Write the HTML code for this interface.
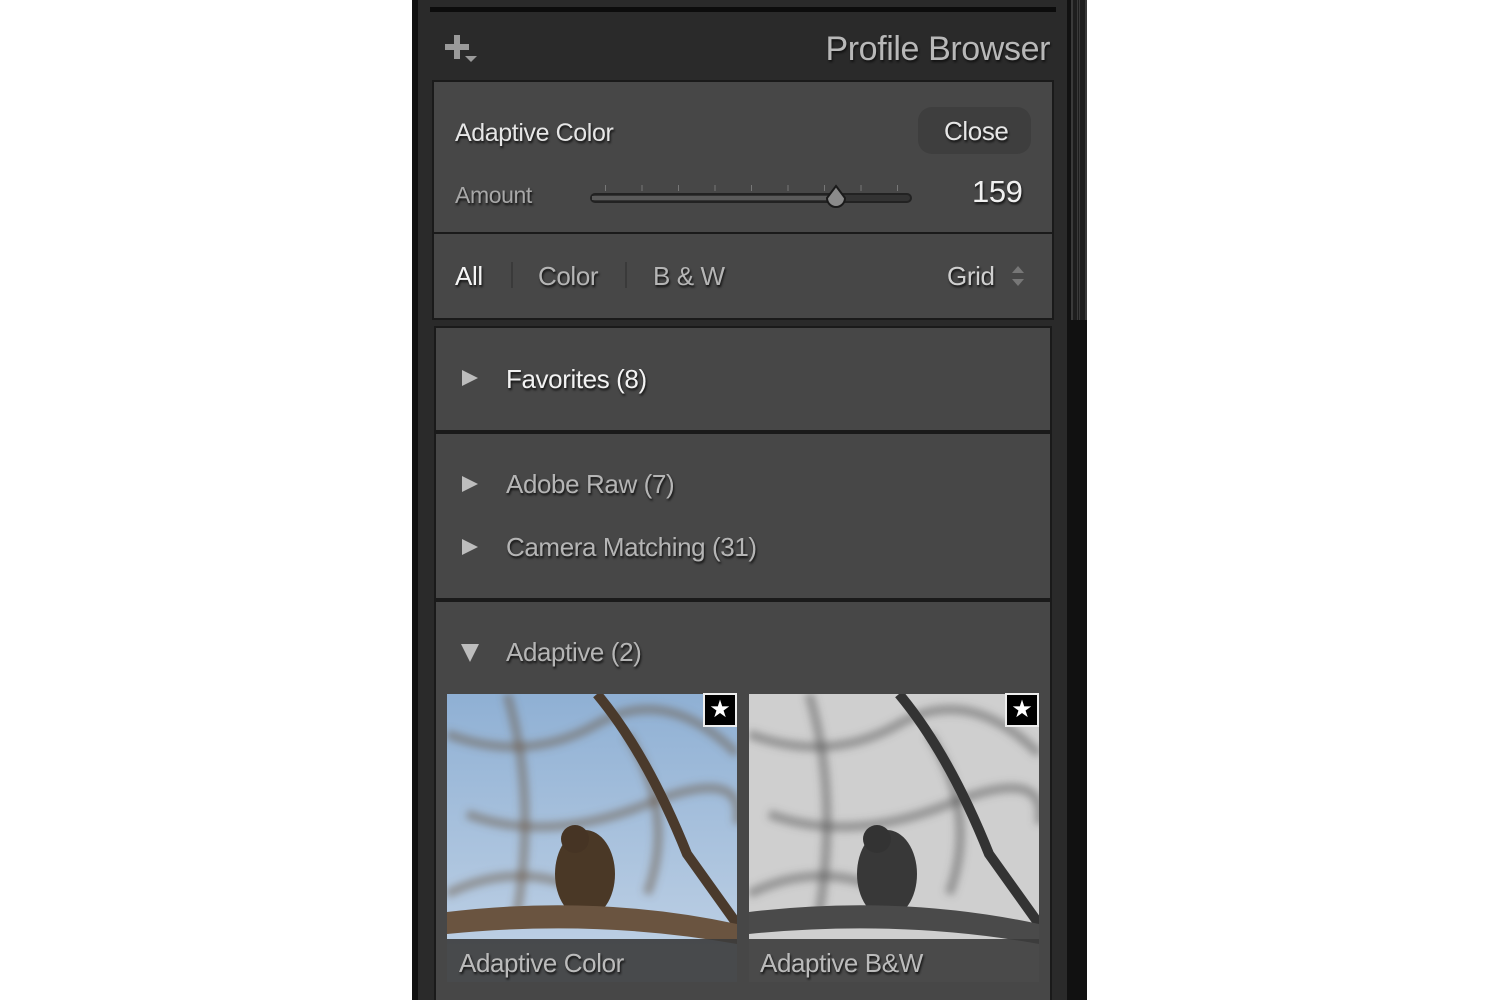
<!DOCTYPE html>
<html><head><style>
*{margin:0;padding:0;box-sizing:border-box}
html,body{width:1500px;height:1000px;overflow:hidden}
body{background:#fff;position:relative;font-family:"Liberation Sans",sans-serif}
.a{position:absolute}
.t{position:absolute;white-space:nowrap;text-shadow:1px 2px 2px #111;letter-spacing:-0.4px}
.sec{position:absolute;left:432px;width:622px;background:#474747;border:2px solid #1a1a1a}
.tri{position:absolute;width:0;height:0;border-top:8px solid transparent;border-bottom:8px solid transparent;border-left:16px solid #bdbdbd}
</style></head><body>
<div class="a" style="left:412px;top:0;width:675px;height:1000px;background:#111"></div>
<div class="a" style="left:418px;top:0;width:649px;height:1000px;background:#2a2a2a"></div>
<div class="a" style="left:430px;top:7px;width:626px;height:5px;background:#0c0c0c"></div>
<div class="a" style="left:1071px;top:0;width:16px;height:320px;background:#1e1e1e;border-left:2px solid #3a3a3a;border-right:2px solid #3a3a3a"></div>
<div class="a" style="left:1077px;top:0;width:3px;height:320px;border-left:1px solid #3a3a3a;border-right:1px solid #3a3a3a"></div>
<div class="a" style="left:445px;top:44px;width:24px;height:6px;background:#9a9a9a"></div>
<div class="a" style="left:454px;top:35px;width:6px;height:24px;background:#9a9a9a"></div>
<div class="a" style="left:465px;top:56px;width:0;height:0;border-left:6px solid transparent;border-right:6px solid transparent;border-top:6px solid #9a9a9a"></div>
<div class="t" style="right:450px;top:30px;font-size:34px;color:#b8b8b8">Profile Browser</div>

<div class="sec" style="top:80px;height:154px"></div>
<div class="t" style="left:455px;top:119px;font-size:25px;color:#e6e6e6">Adaptive Color</div>
<div class="a" style="left:918px;top:107px;width:113px;height:47px;background:#3e3e3e;border-radius:14px"></div>
<div class="t" style="left:944px;top:116px;font-size:26px;color:#e6e6e6">Close</div>
<div class="t" style="left:455px;top:182px;font-size:23px;color:#a8a8a8">Amount</div>
<div class="a" style="left:590px;top:193px;width:322px;height:10px;border-radius:5px;background:#333;border:2px solid #222"></div>
<div class="a" style="left:592px;top:196px;width:244px;height:4px;background:#5a5a5a"></div>
<div style="position:absolute;left:605px;top:185px;width:300px;height:6px;background:repeating-linear-gradient(90deg,#777 0 1px,transparent 1px 36.5px)"></div>
<svg class="a" style="left:823px;top:184px" width="26" height="28"><path d="M13 2 L22 14 A9 9 0 1 1 4 14 Z" fill="#8a8a8a" stroke="#1a1a1a" stroke-width="2"/></svg>
<div class="t" style="left:972px;top:174px;font-size:31px;color:#f0f0f0">159</div>

<div class="sec" style="top:232px;height:88px"></div>
<div class="t" style="left:455px;top:261px;font-size:26px;color:#f5f5f5">All</div>
<div class="a" style="left:511px;top:262px;width:2px;height:26px;background:#3a3a3a"></div>
<div class="t" style="left:538px;top:261px;font-size:26px;color:#b5b5b5">Color</div>
<div class="a" style="left:625px;top:262px;width:2px;height:26px;background:#3a3a3a"></div>
<div class="t" style="left:653px;top:261px;font-size:26px;color:#b5b5b5">B &amp; W</div>
<div class="t" style="left:947px;top:261px;font-size:26px;color:#cfcfcf">Grid</div>
<div class="a" style="left:1012px;top:266px;border-left:6px solid transparent;border-right:6px solid transparent;border-bottom:7px solid #777"></div>
<div class="a" style="left:1012px;top:279px;border-left:6px solid transparent;border-right:6px solid transparent;border-top:7px solid #777"></div>

<div class="sec" style="top:326px;height:106px;left:434px;width:618px"></div>
<div class="tri" style="left:462px;top:370px"></div>
<div class="t" style="left:506px;top:364px;font-size:26px;color:#f2f2f2">Favorites (8)</div>

<div class="sec" style="top:432px;height:168px;left:434px;width:618px"></div>
<div class="tri" style="left:462px;top:476px"></div>
<div class="t" style="left:506px;top:469px;font-size:26px;color:#b5b5b5">Adobe Raw (7)</div>
<div class="tri" style="left:462px;top:539px"></div>
<div class="t" style="left:506px;top:532px;font-size:26px;color:#b5b5b5">Camera Matching (31)</div>

<div class="sec" style="top:600px;height:420px;left:434px;width:618px"></div>
<div class="a" style="left:461px;top:644px;border-left:9px solid transparent;border-right:9px solid transparent;border-top:18px solid #bdbdbd"></div>
<div class="t" style="left:506px;top:637px;font-size:26px;color:#b5b5b5">Adaptive (2)</div>

<svg class="a" style="left:447px;top:694px" width="290" height="288" viewBox="0 0 290 288">
<defs><linearGradient id="sky" x1="0" y1="0" x2="0" y2="1"><stop offset="0" stop-color="#8fb0d4"/><stop offset="1" stop-color="#c2d3e6"/></linearGradient>
<filter id="bl"><feGaussianBlur stdDeviation="4"/></filter></defs>
<rect width="290" height="288" fill="url(#sky)"/>
<g stroke="#6b5a48" stroke-opacity=".5" fill="none" stroke-width="9" filter="url(#bl)">
<path d="M0 40 Q80 70 150 30 T290 60"/><path d="M20 120 Q100 150 200 110 T290 130"/><path d="M0 200 Q60 170 120 190"/><path d="M60 0 Q90 100 70 220"/><path d="M180 40 Q230 120 200 200"/></g>
<path d="M150 0 Q200 60 240 160 L290 230" stroke="#4a3a2c" stroke-width="10" fill="none"/>
<ellipse cx="138" cy="180" rx="30" ry="44" fill="#4a3826"/><circle cx="128" cy="145" r="14" fill="#463424"/>
<path d="M0 218 Q150 200 290 230 L290 250 Q150 225 0 240 Z" fill="#6a5440"/>
<rect y="245" width="290" height="43" fill="#3b3b3b" fill-opacity=".9"/>
</svg>
<svg class="a" style="left:749px;top:694px" width="290" height="288" viewBox="0 0 290 288">
<rect width="290" height="288" fill="#cfcfcf"/>
<g stroke="#555" stroke-opacity=".5" fill="none" stroke-width="9" filter="url(#bl)">
<path d="M0 40 Q80 70 150 30 T290 60"/><path d="M20 120 Q100 150 200 110 T290 130"/><path d="M0 200 Q60 170 120 190"/><path d="M60 0 Q90 100 70 220"/><path d="M180 40 Q230 120 200 200"/></g>
<path d="M150 0 Q200 60 240 160 L290 230" stroke="#333" stroke-width="10" fill="none"/>
<ellipse cx="138" cy="180" rx="30" ry="44" fill="#383838"/><circle cx="128" cy="145" r="14" fill="#333"/>
<path d="M0 218 Q150 200 290 230 L290 250 Q150 225 0 240 Z" fill="#4a4a4a"/>
<rect y="245" width="290" height="43" fill="#3b3b3b" fill-opacity=".9"/>
</svg>
<div class="a" style="left:703px;top:693px;width:34px;height:34px;background:#000;border:2px solid #eee;color:#fff;font-size:24px;line-height:30px;text-align:center">★</div>
<div class="a" style="left:1005px;top:693px;width:34px;height:34px;background:#000;border:2px solid #eee;color:#fff;font-size:24px;line-height:30px;text-align:center">★</div>
<div class="t" style="left:459px;top:948px;font-size:26px;color:#bbb">Adaptive Color</div>
<div class="t" style="left:760px;top:948px;font-size:26px;color:#bbb">Adaptive B&amp;W</div>
</body></html>
